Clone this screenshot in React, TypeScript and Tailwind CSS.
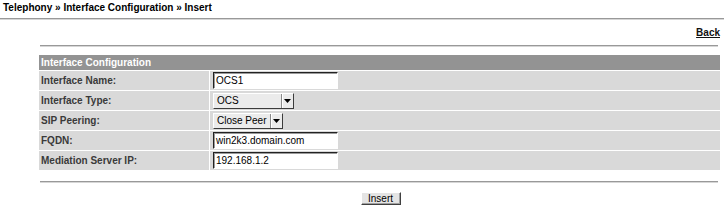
import React from "react";

const font = "font-['Liberation_Sans',Arial,sans-serif]";

function TextBox({ value }: { value: string }) {
  return (
    <div className="flex h-[17px] w-[125px] items-center border border-t-[#222] border-l-[#222] border-b-white border-r-white bg-white pl-[2px] text-[10px] leading-[13px] text-black shadow-[inset_1px_1px_0_#9a9a9a]">
      {value}
    </div>
  );
}

function Select({ value, width }: { value: string; width: string }) {
  return (
    <div
      className={`flex h-[16px] ${width} items-stretch border border-t-white border-l-white border-b-[#3c3c3c] border-r-[#3c3c3c] bg-[#ebebeb] text-[10px] leading-[14px] text-black`}
    >
      <div className="flex flex-1 items-center pl-[3px]">{value}</div>
      <div className="flex w-[12px] items-center justify-center border-l border-l-[#8a8a8a] shadow-[inset_1px_0_0_#fff]">
        <svg width="7" height="4" viewBox="0 0 7 4">
          <polygon points="0,0 7,0 3.5,4" fill="#000" />
        </svg>
      </div>
    </div>
  );
}

const rows: { label: string; field: React.ReactNode }[] = [
  { label: "Interface Name:", field: <TextBox value="OCS1" /> },
  { label: "Interface Type:", field: <Select value="OCS" width="w-[81px]" /> },
  { label: "SIP Peering:", field: <Select value="Close Peer" width="w-[70px]" /> },
  { label: "FQDN:", field: <TextBox value="win2k3.domain.com" /> },
  { label: "Mediation Server IP:", field: <TextBox value="192.168.1.2" /> },
];

function Rule({ className = "" }: { className?: string }) {
  return <div className={`h-[2px] border-t border-t-[#999] border-b border-b-[#d6d6d6] ${className}`} />;
}

export default function App() {
  return (
    <div className={`${font} h-[209px] w-[724px] bg-white text-[10px] text-black`}>
      <div className="h-[18px] pl-[3px] pt-[2px] font-bold leading-[12px]">
        Telephony » Interface Configuration » Insert
      </div>
      <Rule />

      <div className="mt-[7px] flex justify-end pr-[4px] leading-[12px]">
        <a href="#" className="font-bold text-[#111] underline">
          Back
        </a>
      </div>

      <Rule className="ml-[40px] mr-[6px] mt-[6px]" />

      <div className="ml-[39px] mr-[4px] mt-[8px]">
        <div className="h-[15px] bg-[#939393] pl-[2px] font-bold leading-[15px] text-white">
          Interface Configuration
        </div>
        {rows.map((row) => (
          <div key={row.label} className="mt-px grid h-[19px] grid-cols-[170px_1fr] gap-px">
            <div className="bg-[#d9d9d9] pl-[2px] font-bold leading-[19px] text-[#3a3a3a]">{row.label}</div>
            <div className="flex items-center bg-[#d9d9d9] pl-[3px]">{row.field}</div>
          </div>
        ))}
      </div>

      <Rule className="ml-[40px] mr-[6px] mt-[11px]" />

      <div className="mt-[9px] flex justify-center pl-[37px]">
        <button className="h-[13px] w-[40px] border border-t-white border-l-white border-b-[#404040] border-r-[#404040] bg-[#e4e4e4] text-[10px] leading-[11px] text-black shadow-[inset_-1px_-1px_0_#a0a0a0]">
          Insert
        </button>
      </div>
    </div>
  );
}
